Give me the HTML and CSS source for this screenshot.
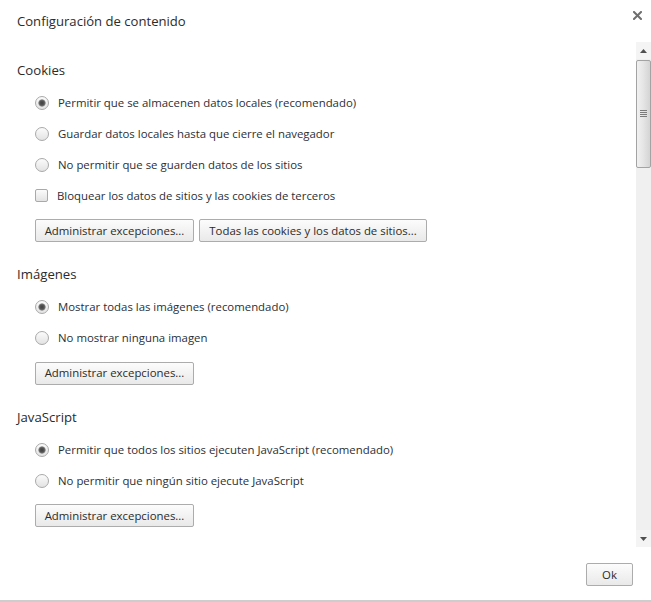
FILE: index.html
```html
<!DOCTYPE html>
<html lang="es">
<head>
<meta charset="utf-8">
<title>Configuración de contenido</title>
<link rel="stylesheet" href="styles.css">
</head>
<body>
<div class="dialog">
  <header class="titlebar">
    <h1 class="title">Configuración de contenido</h1>
    <span class="close" aria-label="Cerrar">
      <svg width="9" height="9" viewBox="0 0 9 9"><path d="M1 1 L8 8 M8 1 L1 8" stroke="#6f6f6f" stroke-width="2" stroke-linecap="square"/></svg>
    </span>
  </header>
  <div class="body">
    <div class="content">
      <section class="section">
        <h2 class="section-title">Cookies</h2>
        <div class="rows">
          <label class="row"><span class="radio checked"></span><span class="label">Permitir que se almacenen datos locales (recomendado)</span></label>
          <label class="row"><span class="radio"></span><span class="label">Guardar datos locales hasta que cierre el navegador</span></label>
          <label class="row"><span class="radio"></span><span class="label">No permitir que se guarden datos de los sitios</span></label>
          <label class="row"><span class="checkbox"></span><span class="label cb-label">Bloquear los datos de sitios y las cookies de terceros</span></label>
        </div>
        <div class="buttons">
          <button class="btn btn-exc">Administrar excepciones...</button>
          <button class="btn btn-all">Todas las cookies y los datos de sitios...</button>
        </div>
      </section>
      <section class="section">
        <h2 class="section-title">Imágenes</h2>
        <div class="rows">
          <label class="row"><span class="radio checked"></span><span class="label">Mostrar todas las imágenes (recomendado)</span></label>
          <label class="row"><span class="radio"></span><span class="label">No mostrar ninguna imagen</span></label>
        </div>
        <div class="buttons">
          <button class="btn btn-exc">Administrar excepciones...</button>
        </div>
      </section>
      <section class="section">
        <h2 class="section-title">JavaScript</h2>
        <div class="rows">
          <label class="row"><span class="radio checked"></span><span class="label">Permitir que todos los sitios ejecuten JavaScript (recomendado)</span></label>
          <label class="row"><span class="radio"></span><span class="label">No permitir que ningún sitio ejecute JavaScript</span></label>
        </div>
        <div class="buttons">
          <button class="btn btn-exc">Administrar excepciones...</button>
        </div>
      </section>
    </div>
    <div class="scrollbar">
      <div class="arrow">
        <svg width="7" height="4" viewBox="0 0 7 4"><path d="M0 4 L3.5 0 L7 4 Z" fill="#505050"/></svg>
      </div>
      <div class="track">
        <div class="thumb">
          <svg width="7" height="8" viewBox="0 0 7 8"><path d="M0 0.5 H7 M0 2.5 H7 M0 4.5 H7 M0 6.5 H7" stroke="#7a7a7a" stroke-width="1"/></svg>
        </div>
      </div>
      <div class="arrow">
        <svg width="7" height="4" viewBox="0 0 7 4"><path d="M0 0 L7 0 L3.5 4 Z" fill="#505050"/></svg>
      </div>
    </div>
  </div>
  <footer class="footer">
    <button class="btn btn-ok">Ok</button>
  </footer>
</div>
</body>
</html>
```
FILE: styles.css
```css
* { box-sizing: border-box; }
html, body { margin: 0; padding: 0; background: #fff; }
body {
  font-family: "Open Sans", "Noto Sans", "Liberation Sans", sans-serif;
  color: #2a2f36;
  font-size: 11.4px;
}
.dialog {
  width: 651px;
  height: 602px;
  display: flex;
  flex-direction: column;
  border-bottom: 2px solid #cdcdcd;
  background: #fff;
}
.titlebar {
  height: 42px;
  display: flex;
  align-items: flex-start;
  justify-content: space-between;
  padding: 11px 9px 0 17px;
}
.title {
  margin: 0;
  font-size: 13.1px;
  font-weight: normal;
  line-height: 20px;
  color: #2b2b2b;
}
.close {
  display: flex;
  margin-top: 0;
}
.body {
  height: 505px;
  display: flex;
}
.content {
  flex: 1;
  overflow: hidden;
  padding: 17.5px 0 0 17px;
}
.section { margin-bottom: 22px; }
.section-title {
  margin: 0 0 7.5px;
  font-size: 13.2px;
  font-weight: normal;
  line-height: 20px;
  color: #2b2b2b;
}
.rows { display: flex; flex-direction: column; }
.row {
  height: 31px;
  display: flex;
  align-items: center;
  padding-left: 18px;
}
.radio {
  width: 14px;
  height: 14px;
  border-radius: 50%;
  border: 1px solid #a9a9a9;
  background: linear-gradient(#fbfbfb, #e3e3e3);
  margin-right: 9px;
  flex: none;
}
.radio.checked {
  background:
    radial-gradient(circle at 50% 50%, #404040 0, #555 2.2px, #7c7c7c 3.2px, rgba(120,120,120,0) 4px),
    linear-gradient(#fbfbfb, #e3e3e3);
}
.checkbox {
  width: 13px;
  height: 13px;
  border-radius: 2px;
  border: 1px solid #a9a9a9;
  background: linear-gradient(#fbfbfb, #e3e3e3);
  margin-right: 9px;
  flex: none;
}
.label { white-space: nowrap; line-height: 16px; }
.buttons {
  display: flex;
  gap: 5px;
  margin-top: 8px;
  padding-left: 18px;
}
.btn {
  font-family: inherit;
  font-size: 11.4px;
  color: #2b2b2b;
  height: 23px;
  padding: 0 6px;
  border: 1px solid #acacac;
  border-radius: 2px;
  background: linear-gradient(#fcfcfc, #e9e9e9);
  line-height: 20px;
  margin: 0;
  white-space: nowrap;
}
.btn-exc { width: 159px; }
.btn-all { width: 228px; }
.scrollbar {
  width: 15px;
  display: flex;
  flex-direction: column;
  background: #f0f0f0;
}
.arrow {
  height: 17px;
  display: flex;
  align-items: center;
  justify-content: center;
  background: #f4f4f4;
}
.track {
  flex: 1;
  padding-top: 1px;
}
.thumb {
  height: 108px;
  border: 1px solid #a3a3a3;
  border-radius: 2px;
  background: linear-gradient(90deg, #f1f1f1, #e6e6e6 45%, #d4d4d4);
  display: flex;
  align-items: center;
  justify-content: center;
}
.footer {
  flex: 1;
  display: flex;
  justify-content: flex-end;
  align-items: flex-start;
  padding: 16px 18px 0 0;
}
.btn-ok {
  width: 47px;
  padding: 0;
}
```
